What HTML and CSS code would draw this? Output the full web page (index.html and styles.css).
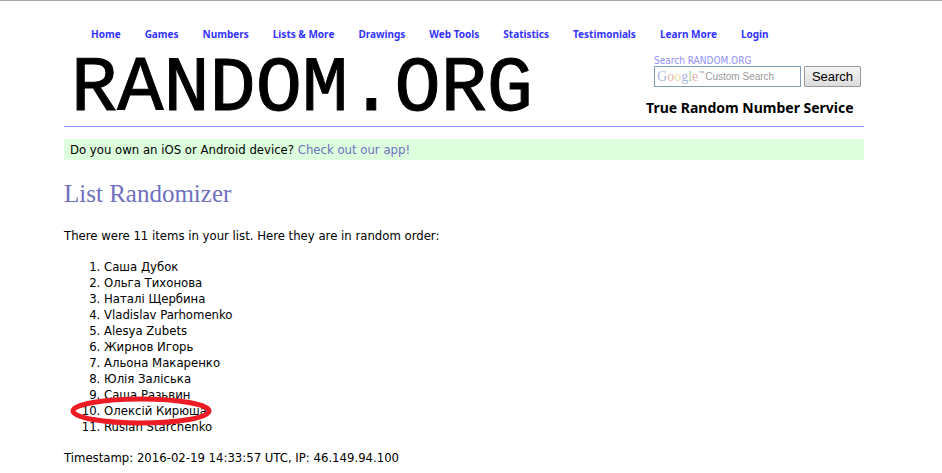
FILE: index.html
```
<!DOCTYPE html>
<html lang="en">
<head>
<meta charset="utf-8">
<title>RANDOM.ORG - List Randomizer</title>
<link rel="stylesheet" href="styles.css">
</head>
<body>
<div class="page">
  <nav class="menu">
    <a href="#">Home</a>
    <a href="#">Games</a>
    <a href="#">Numbers</a>
    <a href="#">Lists &amp; More</a>
    <a href="#">Drawings</a>
    <a href="#">Web Tools</a>
    <a href="#">Statistics</a>
    <a href="#">Testimonials</a>
    <a href="#">Learn More</a>
    <a href="#">Login</a>
  </nav>
  <header class="masthead">
    <div class="logo">RANDOM.ORG</div>
    <div class="side">
      <form class="search">
        <label for="q">Search RANDOM.ORG</label>
        <div class="row">
          <div class="field">
            <input id="q" type="text">
            <div class="hint"><span class="google"><span class="b">G</span><span class="r">o</span><span class="y">o</span><span class="b">g</span><span class="g">l</span><span class="r">e</span></span><span class="tm">™</span><span class="custom">Custom Search</span></div>
          </div>
          <button type="button">Search</button>
        </div>
      </form>
      <p class="tagline">True Random Number Service</p>
    </div>
  </header>
  <p class="notice">Do you own an iOS or Android device? <a href="#">Check out our app!</a></p>
  <main>
    <h1>List Randomizer</h1>
    <p>There were 11 items in your list. Here they are in random order:</p>
    <ol>
      <li>Саша Дубок</li>
      <li>Ольга Тихонова</li>
      <li>Наталі Щербина</li>
      <li>Vladislav Parhomenko</li>
      <li>Alesya Zubets</li>
      <li>Жирнов Игорь</li>
      <li>Альона Макаренко</li>
      <li>Юлія Заліська</li>
      <li>Саша Разьвин</li>
      <li class="marked">Олексій Кирюша<svg class="ring" width="142" height="30" viewBox="0 0 142 30" aria-hidden="true"><ellipse cx="71" cy="15" rx="68" ry="12"/></svg></li>
      <li>Ruslan Starchenko</li>
    </ol>
    <p>Timestamp: 2016-02-19 14:33:57 UTC, IP: 46.149.94.100</p>
  </main>
</div>
</body>
</html>
```
FILE: styles.css
```
* { box-sizing: border-box; }
body {
  margin: 0;
  border-top: 1px solid #a5a5a5;
  background: #fff;
  color: #000;
  font: 13px/16px Tahoma, "DejaVu Sans Condensed", sans-serif;
}
a { color: #7070c0; text-decoration: none; }
p { margin: 0; }
.page { max-width: 864px; padding-left: 64px; }
.menu {
  display: flex;
  gap: 24px;
  padding: 25px 0 1px 27px;
  font-family: Tahoma, "Noto Sans", sans-serif;
  font-size: 10px;
  font-weight: bold;
  white-space: nowrap;
}
.menu a { color: #3333ff; }
.masthead {
  display: flex;
  justify-content: space-between;
  height: 84px;
  border-bottom: 1px solid #9090ff;
}
.logo {
  padding-left: 7px;
  font: 77px/94px "Liberation Mono", monospace;
  -webkit-text-stroke: 1px #000;
}
.side { padding: 12px 3px 0 0; }
.search { margin-left: 8px; }
.search label { display: block; color: #9090ff; font-size: 10px; line-height: 11px; }
.row { display: flex; gap: 3px; }
.field { position: relative; width: 147px; height: 21px; }
.field input {
  width: 100%;
  height: 100%;
  padding: 2px;
  border: 1px solid #7e9db9;
  background: #fff;
}
.hint {
  position: absolute;
  inset: 0 3px;
  display: flex;
  line-height: 20px;
  pointer-events: none;
}
.google { font: 14px/21px "Liberation Serif", serif; }
.b { color: #a9b8de; }
.r { color: #e3b0b0; }
.y { color: #e6d9a0; }
.g { color: #aed2ae; }
.tm { width: 6px; color: #999; font: 6px/14px "Liberation Sans", sans-serif; }
.custom { margin-left: 1px; color: #999; font: 10px/21px "Liberation Sans", sans-serif; }
.row button {
  width: 57px;
  height: 21px;
  padding: 0;
  border: 1px solid #999;
  border-radius: 1px;
  background: linear-gradient(#f4f4f4, #ddd);
  color: #000;
  font: 13px/19px "Liberation Sans", sans-serif;
}
.tagline {
  margin-top: 11px;
  font: bold 14px/20px Tahoma, "Noto Sans", sans-serif;
  white-space: nowrap;
}
.notice { margin-top: 12px; padding: 3px 6px 2px; background: #ddffdd; }
h1 {
  margin: 20px 0;
  color: #7070c0;
  font: 25px/28px Georgia, "Liberation Serif", serif;
}
ol { margin: 15px 0; padding-left: 40px; }
.marked { position: relative; }
.ring {
  position: absolute;
  left: -34px;
  top: -7px;
  fill: none;
  stroke: #ed1c24;
  stroke-width: 5px;
}
```
